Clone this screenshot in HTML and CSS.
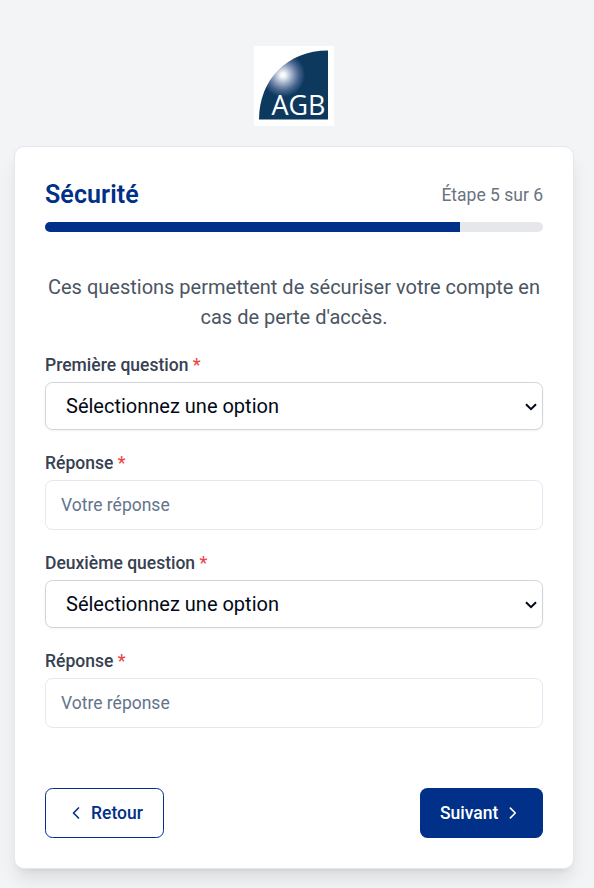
FILE: index.html
```html
<!DOCTYPE html>
<html lang="fr">
<head>
<meta charset="utf-8">
<title>Sécurité</title>
<link rel="stylesheet" href="styles.css">
</head>
<body>
<main class="page">
  <svg class="logo" viewBox="0 0 80 80" role="img" aria-label="AGB">
    <defs>
      <radialGradient id="glow" gradientUnits="userSpaceOnUse" cx="29" cy="29" r="22">
        <stop offset="0" stop-color="#fff"/>
        <stop offset=".12" stop-color="#f1f4f8"/>
        <stop offset=".4" stop-color="#9dacc6"/>
        <stop offset=".7" stop-color="#48678f"/>
        <stop offset="1" stop-color="#0e395f"/>
      </radialGradient>
    </defs>
    <rect width="80" height="80" fill="#fff"/>
    <path d="M74 4.500V73.500H5C5 34 33 4.500 74 4.500Z" fill="url(#glow)"/>
    <text class="logo-text" x="17.500" y="69" textLength="54" lengthAdjust="spacingAndGlyphs">AGB</text>
  </svg>
  <section class="card">
    <header class="card-head">
      <h1 class="title">Sécurité</h1>
      <span class="step">Étape 5 sur 6</span>
    </header>
    <div class="progress"><div class="progress-bar"></div></div>
    <p class="intro">Ces questions permettent de sécuriser votre compte en cas de perte d'accès.</p>
    <form class="form">
      <div class="field">
        <label class="label" for="q1">Première question <span class="required">*</span></label>
        <div class="select-wrap">
          <select class="select" id="q1"><option>Sélectionnez une option</option></select>
          <svg class="caret" viewBox="0 0 12 8"><path d="M1 1.200L6 6.200L11 1.200"/></svg>
        </div>
      </div>
      <div class="field">
        <label class="label" for="r1">Réponse <span class="required">*</span></label>
        <input class="input" id="r1" type="text" placeholder="Votre réponse">
      </div>
      <div class="field">
        <label class="label" for="q2">Deuxième question <span class="required">*</span></label>
        <div class="select-wrap">
          <select class="select" id="q2"><option>Sélectionnez une option</option></select>
          <svg class="caret" viewBox="0 0 12 8"><path d="M1 1.200L6 6.200L11 1.200"/></svg>
        </div>
      </div>
      <div class="field">
        <label class="label" for="r2">Réponse <span class="required">*</span></label>
        <input class="input" id="r2" type="text" placeholder="Votre réponse">
      </div>
      <div class="actions">
        <button class="btn btn-back" type="button">
          <svg class="chevron" viewBox="0 0 24 24"><path d="m15 18-6-6 6-6"/></svg>
          <span>Retour</span>
        </button>
        <button class="btn btn-next" type="button">
          <span>Suivant</span>
          <svg class="chevron" viewBox="0 0 24 24"><path d="m9 18 6-6-6-6"/></svg>
        </button>
      </div>
    </form>
  </section>
</main>
</body>
</html>
```
FILE: styles.css
```css
* { box-sizing: border-box; }

body {
  margin: 0;
  height: 888px;
  overflow: hidden;
  background: #f3f4f6;
  font-family: Roboto, "Liberation Sans", sans-serif;
  color: #020817;
}

.page {
  display: flex;
  flex-direction: column;
  align-items: center;
  padding: 46px 20px 0 14px;
}

.logo {
  display: block;
  width: 80px;
  height: 80px;
  margin-bottom: 20px;
}

.logo-text {
  font-family: "Open Sans", sans-serif;
  font-size: 28px;
  font-weight: 500;
  fill: #fff;
}

.card {
  width: 560px;
  height: 723px;
  padding: 30px;
  background: #fff;
  border: 1px solid #e2e8f0;
  border-radius: 10px;
  box-shadow: 0 12.5px 18.75px -3.75px rgba(0, 0, 0, .1), 0 5px 7.5px -5px rgba(0, 0, 0, .1);
}

.card-head {
  display: flex;
  justify-content: space-between;
  align-items: center;
  height: 35px;
  margin-bottom: 10px;
}

.title {
  margin: 0;
  font-size: 25px;
  line-height: 35px;
  font-weight: 600;
  letter-spacing: .1px;
  color: #003087;
}

.step {
  padding-top: 2px;
  font-size: 17.5px;
  line-height: 25px;
  color: #6b7280;
}

.progress {
  height: 10px;
  border-radius: 5px;
  background: #e5e7eb;
  overflow: hidden;
}

.progress-bar {
  width: 83.33%;
  height: 100%;
  background: #003087;
}

.intro {
  margin: 40px 0 20px;
  font-size: 20px;
  line-height: 30px;
  text-align: center;
  color: #4b5563;
}

.form {
  display: flex;
  flex-direction: column;
  gap: 20px;
}

.label {
  display: block;
  height: 25px;
  margin-bottom: 5px;
  font-size: 17.5px;
  line-height: 27px;
  font-weight: 500;
  color: #374151;
}

.required { color: #ef4444; }

.select-wrap { position: relative; }

.select {
  display: block;
  appearance: none;
  width: 100%;
  height: 48px;
  margin: 0;
  padding: 0 20px;
  border: 1px solid #d1d5db;
  border-radius: 7.5px;
  background: #fff;
  box-shadow: 0 1px 2.5px rgba(0, 0, 0, .05);
  font: 400 20px/30px Roboto, sans-serif;
  color: #020817;
}

.caret {
  position: absolute;
  right: 6px;
  top: 21px;
  width: 12px;
  height: 8px;
  fill: none;
  stroke: #020817;
  stroke-width: 2;
}

.input {
  display: block;
  width: 100%;
  height: 50px;
  margin: 0;
  padding: 0 15px;
  border: 1px solid #e2e8f0;
  border-radius: 7.5px;
  background: #fff;
  font: 400 17.5px/25px Roboto, sans-serif;
}

.input::placeholder { color: #64748b; }

.actions {
  display: flex;
  justify-content: space-between;
  margin-top: 40px;
}

.btn {
  display: flex;
  align-items: center;
  justify-content: center;
  height: 50px;
  padding: 0 20px;
  border-radius: 7.5px;
  font: 500 17.5px/25px Roboto, sans-serif;
}

.btn-back {
  gap: 5px;
  width: 119px;
  border: 1px solid #003087;
  background: #fff;
  color: #003087;
}

.btn-next {
  gap: 5px;
  width: 123px;
  border: 0;
  background: #003087;
  color: #fff;
}

.chevron {
  width: 20px;
  height: 20px;
  fill: none;
  stroke: currentColor;
  stroke-width: 2;
  stroke-linecap: round;
  stroke-linejoin: round;
}
```
